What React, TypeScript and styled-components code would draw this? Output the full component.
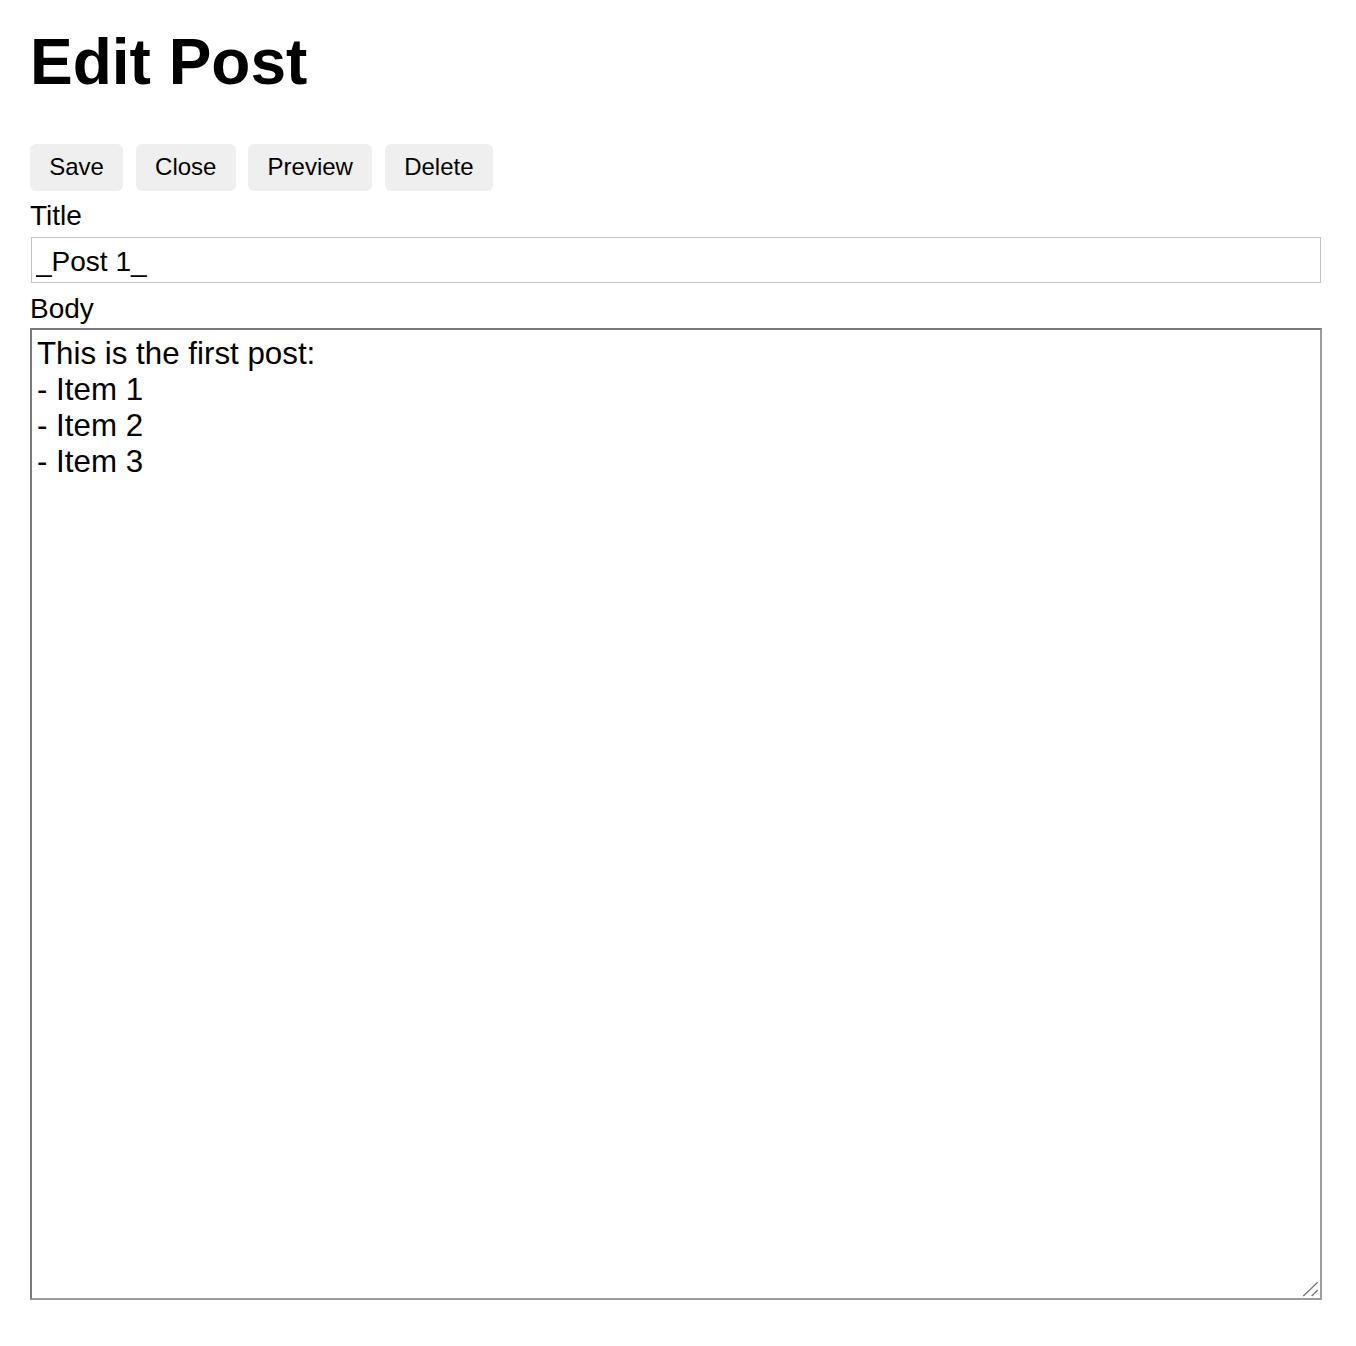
import React from "react";
import styled, { createGlobalStyle } from "styled-components";

const GlobalStyle = createGlobalStyle`
  html, body {
    margin: 0;
    padding: 0;
    background: #ffffff;
  }
  body {
    font-family: "Liberation Sans", Arial, sans-serif;
    color: #000000;
  }
  * {
    box-sizing: border-box;
  }
`;

const Page = styled.main`
  display: flex;
  flex-direction: column;
  align-items: flex-start;
  width: 1352px;
  padding: 26px 30px 40px;
`;

const Heading = styled.h1`
  margin: 0;
  font-family: "Liberation Sans", Arial, sans-serif;
  font-size: 64px;
  font-weight: 700;
  line-height: 1.15;
`;

const Toolbar = styled.div`
  display: flex;
  gap: 12.8px;
  margin-top: 44.4px;
`;

const Button = styled.button`
  height: 46.8px;
  padding: 0 19.2px;
  border: none;
  border-radius: 6px;
  background: #efefef;
  color: #000000;
  font-family: "Liberation Sans", Arial, sans-serif;
  font-size: 24px;
  line-height: 46.8px;
  cursor: pointer;
`;

const Label = styled.label<{ $gap: number }>`
  display: block;
  margin-top: ${(p) => p.$gap}px;
  font-family: "Liberation Sans", Arial, sans-serif;
  font-size: 28px;
  line-height: 32px;
`;

const TitleInput = styled.input`
  display: block;
  width: 1290px;
  height: 46px;
  margin: 5px 1px 0;
  padding: 8px 4px 4px;
  border: 1px solid #c2c2c2;
  border-radius: 0;
  background: #ffffff;
  color: #000000;
  font-family: "Liberation Sans", Arial, sans-serif;
  font-size: 28px;
  line-height: 32px;
  outline: none;
`;

const AreaFrame = styled.div`
  position: relative;
  margin-top: 3.2px;
  width: 1292px;
  height: 972px;
`;

const BodyArea = styled.textarea`
  display: block;
  width: 100%;
  height: 100%;
  padding: 6px 5px 5px;
  border-style: solid;
  border-width: 2px;
  border-color: #7a7a7a #9c9c9c #9c9c9c #7a7a7a;
  border-radius: 0;
  background: #ffffff;
  color: #000000;
  font-family: "Liberation Sans", Arial, sans-serif;
  font-size: 31.3px;
  line-height: 36px;
  outline: none;
  resize: none;
`;

const Grip = styled.svg`
  position: absolute;
  right: 2px;
  bottom: 2px;
  width: 18px;
  height: 18px;
  pointer-events: none;
`;

const bodyText = `This is the first post:
- Item 1
- Item 2
- Item 3`;

export default function App() {
  return (
    <>
      <GlobalStyle />
      <Page>
        <Heading>Edit Post</Heading>
        <Toolbar>
          <Button type="button">Save</Button>
          <Button type="button">Close</Button>
          <Button type="button">Preview</Button>
          <Button type="button">Delete</Button>
        </Toolbar>
        <Label $gap={8.8} htmlFor="title">Title</Label>
        <TitleInput id="title" defaultValue="_Post 1_" />
        <Label $gap={10} htmlFor="body">Body</Label>
        <AreaFrame>
          <BodyArea id="body" defaultValue={bodyText} />
          <Grip viewBox="0 0 18 18" aria-hidden="true">
            <line x1="1.3" y1="16" x2="15.7" y2="2.3" stroke="#6f6f6f" strokeWidth="1.2" />
            <line x1="9.7" y1="16" x2="15.7" y2="10" stroke="#6f6f6f" strokeWidth="1.2" />
          </Grip>
        </AreaFrame>
      </Page>
    </>
  );
}
